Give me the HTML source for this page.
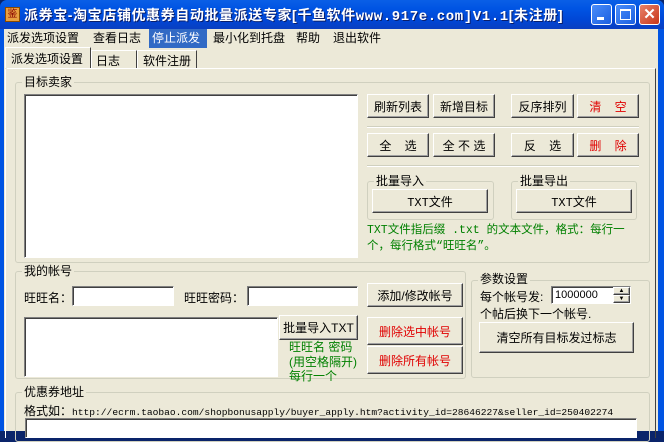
<!DOCTYPE html>
<html><head><meta charset="utf-8"><style>
*{box-sizing:border-box;margin:0;padding:0}
body{width:664px;height:431px;overflow:hidden;background:#0a246a;font-family:"Liberation Sans","Noto Sans CJK SC","WenQuanYi Zen Hei",sans-serif;font-size:12px;color:#000;position:relative}
.a{position:absolute}
#title{left:0;top:0;width:664px;height:29px;background:linear-gradient(#0a5fe6,#0054e3 30%,#0046d5 70%,#0a3fc0);border-radius:7px 7px 0 0}
#frame{left:0;top:29px;width:664px;height:402px;background:#0054e3}
#client{left:4px;top:29px;width:654px;height:402px;background:#ece9d8}
.tb{width:21px;height:21px;top:4px;border:1px solid #fff;border-radius:3px;background:linear-gradient(135deg,#4a8dfa,#1a5fe0)}
.btn{position:absolute;background:#ece9d8;border-top:1px solid #fff;border-left:1px solid #fff;border-right:1px solid #404040;border-bottom:1px solid #404040;box-shadow:inset -1px -1px 0 #a0a0a0;text-align:center;font-size:12px;display:flex;align-items:center;justify-content:center;white-space:pre}
.grp{position:absolute;border:1px solid #d0d0bf;border-radius:3px}
.gl{position:absolute;background:#ece9d8;padding:0 2px;font-size:12px;line-height:13px}
.inp{position:absolute;background:#fff;border-top:1px solid #808080;border-left:1px solid #808080;border-right:1px solid #fff;border-bottom:1px solid #fff;box-shadow:inset 1px 1px 0 #404040}
.red{color:#e00000}.grn{color:#008000}
.mono{font-family:"Liberation Mono","Noto Sans CJK SC",monospace;font-size:11px}
</style></head><body>
<div class="a" id="frame"></div>
<div class="a" id="title"></div>
<div class="a" style="left:5px;top:7px;width:15px;height:15px;background:#e8a040;border:1px solid #8a4a00;font-size:10px;color:#800;line-height:13px;text-align:center">鉴</div>
<div class="a" style="left:24px;top:5px;color:#fff;font-weight:bold;font-size:14px;letter-spacing:0.6px;white-space:nowrap;text-shadow:1px 1px #0a1e6a">派券宝-淘宝店铺优惠券自动批量派送专家[千鱼软件<span style="font-family:'Liberation Mono',monospace">www.917e.com]V1.1</span>[未注册]</div>
<div class="a tb" style="left:591px"><div class="a" style="left:5px;top:12px;width:7px;height:3px;background:#fff"></div></div>
<div class="a tb" style="left:615px"><div class="a" style="left:4px;top:4px;width:11px;height:11px;border:1px solid #fff;border-top-width:2px"></div></div>
<div class="a tb" style="left:639px;background:linear-gradient(135deg,#e8826a,#c8361a);color:#fff;font-weight:bold;font-size:15px;line-height:19px;text-align:center">✕</div>
<div class="a" id="client"></div>
<div class="a" style="left:4px;top:29px;height:19px;width:654px;font-size:12px;line-height:19px;white-space:nowrap">
<span class="a" style="left:3px">派发选项设置</span><span class="a" style="left:89px">查看日志</span><span class="a" style="left:145px;width:58px;background:#316ac5;color:#fff;padding-left:3px">停止派发</span><span class="a" style="left:209px">最小化到托盘</span><span class="a" style="left:292px">帮助</span><span class="a" style="left:329px">退出软件</span></div>
<div class="a" style="left:5px;top:47px;width:86px;height:22px;border:1px solid #fff;border-right-color:#404040;border-bottom:none;background:#ece9d8;padding:2px 0 0 5px">派发选项设置</div>
<div class="a" style="left:91px;top:50px;width:46px;height:18px;border:1px solid #fff;border-right-color:#404040;border-bottom:none;padding:1px 0 0 4px">日志</div>
<div class="a" style="left:137px;top:50px;width:60px;height:18px;border:1px solid #fff;border-right-color:#404040;border-bottom:none;padding:1px 0 0 5px">软件注册</div>
<div class="a" style="left:5px;top:68px;width:651px;height:370px;border-top:1px solid #fff;border-left:1px solid #fff;border-right:1px solid #404040"></div>
<div class="a" style="left:5px;top:68px;width:2px;height:1px;background:#ece9d8"></div>
<div class="grp" style="left:15px;top:82px;width:635px;height:181px"></div>
<div class="gl" style="left:22px;top:76px">目标卖家</div>
<div class="inp" style="left:24px;top:94px;width:334px;height:164px"></div>
<div class="btn" style="left:367px;top:94px;width:62px;height:24px">刷新列表</div>
<div class="btn" style="left:433px;top:94px;width:62px;height:24px">新增目标</div>
<div class="btn" style="left:511px;top:94px;width:63px;height:24px">反序排列</div>
<div class="btn red" style="left:577px;top:94px;width:62px;height:24px">清    空</div>
<div class="a" style="left:367px;top:126px;width:272px;height:2px;border-top:1px solid #d0d0bf;border-bottom:1px solid #fff"></div>
<div class="btn" style="left:367px;top:133px;width:62px;height:24px">全    选</div>
<div class="btn" style="left:433px;top:133px;width:62px;height:24px">全 不 选</div>
<div class="btn" style="left:511px;top:133px;width:63px;height:24px">反    选</div>
<div class="btn red" style="left:577px;top:133px;width:62px;height:24px">删    除</div>
<div class="a" style="left:367px;top:165px;width:272px;height:2px;border-top:1px solid #d0d0bf;border-bottom:1px solid #fff"></div>
<div class="grp" style="left:367px;top:181px;width:127px;height:39px"></div>
<div class="gl" style="left:374px;top:175px">批量导入</div>
<div class="btn mono" style="left:372px;top:189px;width:116px;height:24px;font-size:12px">TXT文件</div>
<div class="grp" style="left:511px;top:181px;width:126px;height:39px"></div>
<div class="gl" style="left:518px;top:175px">批量导出</div>
<div class="btn mono" style="left:516px;top:189px;width:116px;height:24px;font-size:12px">TXT文件</div>
<div class="a grn mono" style="left:367px;top:223px;width:275px;line-height:16px;font-size:11.5px">TXT文件指后缀 .txt 的文本文件，格式：每行一<br>个，每行格式“旺旺名”。</div>
<div class="grp" style="left:15px;top:271px;width:451px;height:108px"></div>
<div class="gl" style="left:22px;top:265px">我的帐号</div>
<div class="a" style="left:24px;top:289px">旺旺名：</div>
<div class="inp" style="left:72px;top:286px;width:102px;height:20px"></div>
<div class="a" style="left:184px;top:289px">旺旺密码：</div>
<div class="inp" style="left:247px;top:286px;width:111px;height:20px"></div>
<div class="btn" style="left:367px;top:283px;width:96px;height:24px">添加/修改帐号</div>
<div class="inp" style="left:24px;top:317px;width:254px;height:60px"></div>
<div class="btn" style="left:279px;top:315px;width:79px;height:25px">批量导入TXT</div>
<div class="a grn" style="left:289px;top:340px;line-height:14.5px;white-space:nowrap">旺旺名 密码<br>(用空格隔开)<br>每行一个</div>
<div class="btn red" style="left:367px;top:317px;width:96px;height:28px">删除选中帐号</div>
<div class="btn red" style="left:367px;top:346px;width:96px;height:28px">删除所有帐号</div>
<div class="grp" style="left:471px;top:280px;width:179px;height:98px"></div>
<div class="gl" style="left:478px;top:273px">参数设置</div>
<div class="a" style="left:480px;top:288px">每个帐号发:</div>
<div class="inp" style="left:551px;top:286px;width:80px;height:18px;padding:2px 0 0 3px;font-size:11px">1000000</div>
<div class="btn" style="left:613px;top:287px;width:17px;height:8px;font-size:6px">▲</div>
<div class="btn" style="left:613px;top:295px;width:17px;height:8px;font-size:6px">▼</div>
<div class="a" style="left:480px;top:305px">个帖后换下一个帐号.</div>
<div class="btn" style="left:479px;top:322px;width:155px;height:31px">清空所有目标发过标志</div>
<div class="grp" style="left:15px;top:392px;width:635px;height:50px"></div>
<div class="gl" style="left:22px;top:386px">优惠券地址</div>
<div class="a" style="left:24px;top:402px;white-space:nowrap">格式如：<span class="mono" style="font-size:9.6px">http://ecrm.taobao.com/shopbonusapply/buyer_apply.htm?activity_id=28646227&amp;seller_id=250402274</span></div>
<div class="inp" style="left:25px;top:418px;width:612px;height:20px"></div>
</body></html>
